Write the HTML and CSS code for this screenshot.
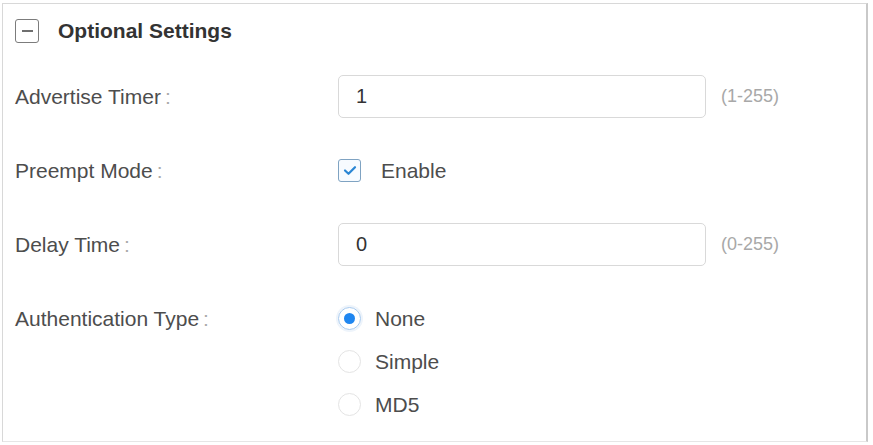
FILE: index.html
```html
<!DOCTYPE html>
<html lang="en">
<head>
    <meta charset="UTF-8">
    <meta name="viewport" content="width=device-width, initial-scale=1.0">
    <title>Optional Settings</title>
    <link rel="stylesheet" href="styles.css">
</head>
<body>
    <div class="panel">
        <div class="panel-header">
            <span class="collapse-btn"><span class="minus"></span></span>
            <h3>Optional Settings</h3>
        </div>
        <form class="settings-form">
            <label class="field-label">Advertise Timer<span class="colon">:</span></label>
            <div class="field">
                <input class="text-input" type="text" value="1">
                <span class="hint">(1-255)</span>
            </div>

            <label class="field-label">Preempt Mode<span class="colon">:</span></label>
            <div class="field">
                <span class="checkbox checked">
                    <svg width="14" height="11" viewBox="0 0 14 11"><path d="M2 5.5l3.5 3.3L12 2.2" fill="none" stroke="#2a86d4" stroke-width="2.2" stroke-linecap="round" stroke-linejoin="round"/></svg>
                </span>
                <span class="option-text check-text">Enable</span>
            </div>

            <label class="field-label">Delay Time<span class="colon">:</span></label>
            <div class="field">
                <input class="text-input" type="text" value="0">
                <span class="hint">(0-255)</span>
            </div>

            <label class="field-label">Authentication Type<span class="colon">:</span></label>
            <div class="radio-group">
                <div class="radio-row">
                    <span class="radio checked"><span class="dot"></span></span>
                    <span class="option-text">None</span>
                </div>
                <div class="radio-row">
                    <span class="radio"></span>
                    <span class="option-text">Simple</span>
                </div>
                <div class="radio-row">
                    <span class="radio"></span>
                    <span class="option-text">MD5</span>
                </div>
            </div>
        </form>
    </div>
</body>
</html>
```

FILE: styles.css
```css
body {
    font-family: "Liberation Sans", Arial, sans-serif;
    margin: 3px 0 0 2px;
    padding: 0;
    background-color: #fff;
}

.panel {
    width: 866px;
    height: 439px;
    border: 1px solid #d8d8d8;
    border-right: 2px solid #c9c9c9;
    border-bottom-color: #e6e6e6;
    padding: 15px 0 0 12px;
    box-sizing: border-box;
}

.panel-header {
    display: flex;
    align-items: center;
    height: 24px;
    margin-bottom: 32px;
}

.collapse-btn {
    width: 24px;
    height: 24px;
    box-sizing: border-box;
    border: 1.5px solid #7c7c7c;
    border-radius: 3px;
    display: flex;
    align-items: center;
    justify-content: center;
}

.minus {
    width: 11px;
    height: 1.5px;
    background-color: #6f6f6f;
}

.panel-header h3 {
    margin: 0 0 0 19px;
    font-size: 21px;
    font-weight: bold;
    color: #333;
}

.settings-form {
    display: grid;
    grid-template-columns: 323px 1fr;
    row-gap: 31px;
}

.field-label {
    font-size: 21px;
    color: #4d4d4d;
    line-height: 43px;
    height: 43px;
}

.colon {
    color: #aaa;
    margin-left: 4px;
}

.field {
    display: flex;
    align-items: center;
    height: 43px;
}

.text-input {
    width: 368px;
    height: 43px;
    box-sizing: border-box;
    border: 1px solid #d9d9d9;
    border-radius: 5px;
    padding: 0 0 0 17px;
    font-family: inherit;
    font-size: 20px;
    color: #333;
    outline: none;
}

.hint {
    margin-left: 15px;
    font-size: 18px;
    color: #a8a8a8;
}

.checkbox {
    width: 23px;
    height: 23px;
    box-sizing: border-box;
    border: 1.5px solid #7fa3c2;
    border-radius: 3px;
    background-color: #f7fbff;
    display: flex;
    align-items: center;
    justify-content: center;
}

.option-text {
    font-size: 21px;
    color: #4d4d4d;
    margin-left: 14px;
}

.check-text {
    margin-left: 20px;
}

.radio-group {
    display: flex;
    flex-direction: column;
}

.radio-row {
    display: flex;
    align-items: center;
    height: 43px;
}

.radio {
    width: 23px;
    height: 23px;
    box-sizing: border-box;
    border: 1.5px solid #e4e4e4;
    border-radius: 50%;
    display: flex;
    align-items: center;
    justify-content: center;
}

.radio.checked {
    border-color: #a6c9ee;
    box-shadow: 0 0 0 2px #eef4fb;
}

.dot {
    width: 11px;
    height: 11px;
    border-radius: 50%;
    background-color: #1f86f0;
}
```
